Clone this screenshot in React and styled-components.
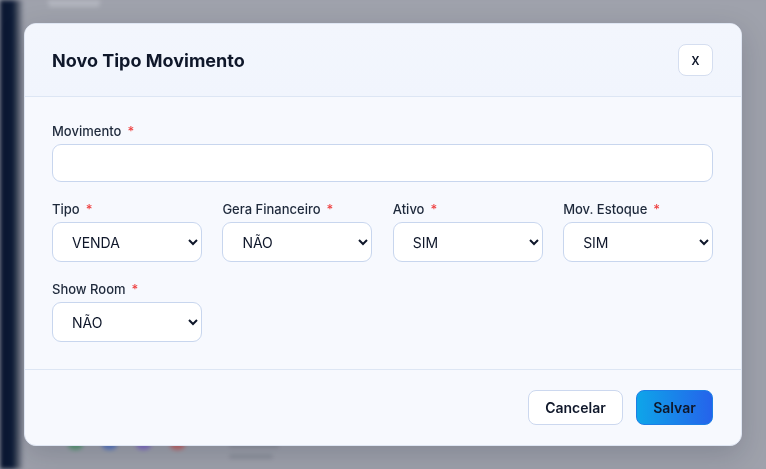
import React from "react";
import styled, { createGlobalStyle } from "styled-components";

const Global = createGlobalStyle`
  html, body { margin: 0; padding: 0; height: 100%; }
  body { font-family: Inter, "Noto Sans", sans-serif; background: #9ea1ab; overflow: hidden; }
  #root { height: 100%; }
  * { box-sizing: border-box; }
`;

const Page = styled.div`
  display: flex;
  height: 469px;
  width: 766px;
  filter: blur(2px);
`;

const Sidebar = styled.aside`
  width: 24px;
  flex: none;
  background: linear-gradient(90deg, #0a1630 0%, #0c1a36 52%, #3a4356 68%, #9fa2ac 100%);
`;

const Main = styled.main`
  flex: 1;
  background: #9fa2ac;
  display: flex;
  flex-direction: column;
  justify-content: space-between;
  padding: 0 0 10px 24px;
`;

const TopChip = styled.div`
  width: 52px;
  height: 7px;
  background: #b2b5be;
  border-radius: 0 0 4px 4px;
`;

const BottomRow = styled.div`
  display: flex;
  align-items: flex-start;
  gap: 44px;
  padding-left: 20px;
`;

const DotRow = styled.div`
  display: flex;
  gap: 19px;
`;

const Dot = styled.span`
  width: 15px;
  height: 10px;
  border-radius: 50%;
  background: ${(p) => p.$c};
  opacity: 0.8;
`;

const GhostText = styled.div`
  display: flex;
  flex-direction: column;
  gap: 6px;
  padding-top: 3px;
`;

const GhostLine = styled.span`
  width: ${(p) => p.$w}px;
  height: 5px;
  border-radius: 3px;
  background: #8e929c;
`;

const Overlay = styled.div`
  position: fixed;
  inset: 0;
  display: flex;
  align-items: center;
  justify-content: center;
`;

const Modal = styled.div`
  width: 718px;
  background: #f7f9fe;
  border-radius: 12px;
  box-shadow: 0 10px 30px rgba(15, 23, 42, 0.18);
  border: 1px solid #dfe6f3;
  overflow: hidden;
  display: flex;
  flex-direction: column;
`;

const Header = styled.div`
  display: flex;
  align-items: center;
  justify-content: space-between;
  padding: 20px 28px 20px 27px;
  background: linear-gradient(180deg, #f3f6fd 0%, #f1f5fd 100%);
  border-bottom: 1px solid #dde6f4;
`;

const Title = styled.h2`
  margin: 0;
  font-size: 18px;
  font-weight: 700;
  color: #0f172a;
  letter-spacing: 0;
`;

const CloseBtn = styled.button`
  width: 35px;
  height: 32px;
  border-radius: 8px;
  border: 1px solid #d5def0;
  background: #ffffff;
  font-family: Inter, sans-serif;
  font-size: 15px;
  font-weight: 500;
  color: #0f172a;
  display: flex;
  align-items: center;
  justify-content: center;
  padding: 0 0 2px;
`;

const Body = styled.div`
  padding: 26px 28px 27px 27px;
  display: flex;
  flex-direction: column;
  gap: 19px;
`;

const Grid = styled.div`
  display: grid;
  grid-template-columns: repeat(4, 1fr);
  column-gap: 20.5px;
  row-gap: 19px;
`;

const Field = styled.div`
  display: flex;
  flex-direction: column;
  gap: 5px;
`;

const Label = styled.label`
  font-size: 13px;
  line-height: 16px;
  font-weight: 500;
  color: #1e293b;
`;

const Req = styled.span`
  color: #ef4444;
  margin-left: 6px;
`;

const Input = styled.input`
  height: 38px;
  border: 1px solid #c8d6ee;
  border-radius: 9px;
  background: #ffffff;
  font-family: Inter, sans-serif;
  font-size: 14px;
  padding: 0 16px;
  outline: none;
`;

const Select = styled.select`
  height: 40px;
  width: 100%;
  border: 1px solid #c8d6ee;
  border-radius: 9px;
  background: #ffffff;
  font-family: Inter, sans-serif;
  font-size: 14px;
  color: #0f172a;
  padding: 0 6px 0 15px;
  outline: none;
`;

const Footer = styled.div`
  display: flex;
  justify-content: flex-end;
  gap: 13px;
  padding: 20px 28px 20px;
  border-top: 1px solid #dde6f4;
`;

const Button = styled.button`
  height: 35px;
  padding: 0 16px;
  border-radius: 8px;
  font-family: Inter, sans-serif;
  font-size: 14px;
  font-weight: 600;
  color: #0f172a;
  border: 1px solid ${(p) => (p.$primary ? "#1d7fe6" : "#ccd8ef")};
  background: ${(p) =>
    p.$primary ? "linear-gradient(90deg, #0ea5e9 0%, #2563eb 100%)" : "#ffffff"};
  min-width: ${(p) => (p.$primary ? "77px" : "95px")};
`;

const fields = [
  { label: "Tipo", value: "VENDA", options: ["VENDA", "COMPRA"] },
  { label: "Gera Financeiro", value: "NÃO", options: ["SIM", "NÃO"] },
  { label: "Ativo", value: "SIM", options: ["SIM", "NÃO"] },
  { label: "Mov. Estoque", value: "SIM", options: ["SIM", "NÃO"] },
  { label: "Show Room", value: "NÃO", options: ["SIM", "NÃO"] },
];

export default function App() {
  return (
    <>
      <Global />
      <Page>
        <Sidebar />
        <Main>
          <TopChip />
          <BottomRow>
            <DotRow>
              <Dot $c="#4c9a6a" />
              <Dot $c="#4a6fc4" />
              <Dot $c="#7a64c8" />
              <Dot $c="#c45a5a" />
            </DotRow>
            <GhostText>
              <GhostLine $w={50} />
              <GhostLine $w={44} />
            </GhostText>
          </BottomRow>
        </Main>
      </Page>
      <Overlay>
        <Modal>
          <Header>
            <Title>Novo Tipo Movimento</Title>
            <CloseBtn>x</CloseBtn>
          </Header>
          <Body>
            <Field>
              <Label>
                Movimento<Req>*</Req>
              </Label>
              <Input />
            </Field>
            <Grid>
              {fields.map((f) => (
                <Field key={f.label}>
                  <Label>
                    {f.label}
                    <Req>*</Req>
                  </Label>
                  <Select defaultValue={f.value}>
                    {f.options.map((o) => (
                      <option key={o}>{o}</option>
                    ))}
                  </Select>
                </Field>
              ))}
            </Grid>
          </Body>
          <Footer>
            <Button>Cancelar</Button>
            <Button $primary>Salvar</Button>
          </Footer>
        </Modal>
      </Overlay>
    </>
  );
}
